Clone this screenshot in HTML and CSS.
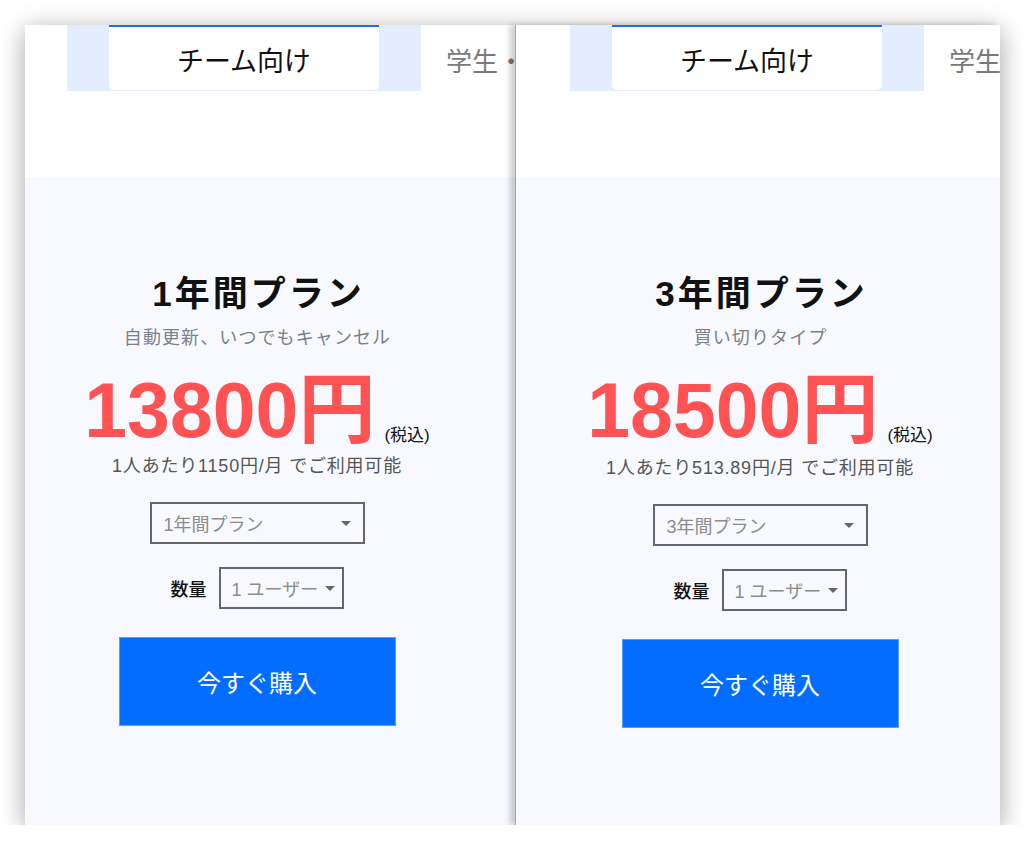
FILE: index.html
```html
<!DOCTYPE html>
<html lang="ja">
<head>
<meta charset="utf-8">
<title>プラン</title>
<link rel="stylesheet" href="styles.css">
</head>
<body>
<div class="frame">
  <section class="panel panel-left">
    <div class="screen">
      <div class="tabs">
        <div class="tabbar"><div class="tab-active">チーム向け</div></div>
        <div class="tab-other">学生・</div>
      </div>
      <div class="spacer"></div>
      <div class="plan">
        <h2 class="plan-title">1年間プラン</h2>
        <p class="plan-sub">自動更新、いつでもキャンセル</p>
        <div class="price-row"><span class="price">13800円</span><span class="tax">(税込)</span></div>
        <p class="per-month">1人あたり1150円/月 でご利用可能</p>
        <div class="select select-plan"><span class="select-text">1年間プラン</span><svg class="caret" width="10" height="5" viewBox="0 0 10 5"><polygon points="0,0 10,0 5,5"/></svg></div>
        <div class="qty-row"><span class="qty-label">数量</span><div class="select select-qty"><span class="select-text">1 ユーザー</span><svg class="caret" width="10" height="5" viewBox="0 0 10 5"><polygon points="0,0 10,0 5,5"/></svg></div></div>
        <button class="buy" type="button">今すぐ購入</button>
      </div>
    </div>
  </section>
  <section class="panel panel-right">
    <div class="screen">
      <div class="tabs">
        <div class="tabbar"><div class="tab-active">チーム向け</div></div>
        <div class="tab-other">学生</div>
      </div>
      <div class="spacer"></div>
      <div class="plan">
        <h2 class="plan-title">3年間プラン</h2>
        <p class="plan-sub">買い切りタイプ</p>
        <div class="price-row"><span class="price">18500円</span><span class="tax">(税込)</span></div>
        <p class="per-month">1人あたり513.89円/月 でご利用可能</p>
        <div class="select select-plan"><span class="select-text">3年間プラン</span><svg class="caret" width="10" height="5" viewBox="0 0 10 5"><polygon points="0,0 10,0 5,5"/></svg></div>
        <div class="qty-row"><span class="qty-label">数量</span><div class="select select-qty"><span class="select-text">1 ユーザー</span><svg class="caret" width="10" height="5" viewBox="0 0 10 5"><polygon points="0,0 10,0 5,5"/></svg></div></div>
        <button class="buy" type="button">今すぐ購入</button>
      </div>
    </div>
  </section>
</div>
</body>
</html>
```

FILE: styles.css
```css
* { box-sizing: border-box; }
html, body { margin: 0; padding: 0; background: #ffffff; }
body {
  font-family: "Liberation Sans", "Noto Sans CJK JP", sans-serif;
  color: #111;
}
.frame {
  margin: 25px 0 0 25px;
  width: 975px;
  height: 800px;
  display: flex;
  background: #ffffff;
  box-shadow: 0 5px 24px rgba(0, 0, 0, 0.36);
}
.panel {
  height: 800px;
  overflow: hidden;
  background: #f8f9fe;
  flex: none;
}
.panel-left { width: 490px; }
.panel-right {
  width: 485px;
  border-left: 1px solid #a6a6a6;
  box-shadow: -5px 0 6px rgba(0, 0, 0, 0.2);
}
.screen { width: 520px; flex: none; }
.panel-left .screen { margin-left: -18px; }
.panel-right .screen { margin-left: -6px; }

.tabs {
  display: flex;
  align-items: flex-start;
  height: 66px;
  padding-left: 60px;
  background: #ffffff;
  white-space: nowrap;
}
.tabbar {
  flex: none;
  width: 354px;
  height: 66px;
  padding-left: 42px;
  background: #e4edfd;
}
.tab-active {
  width: 270px;
  height: 65px;
  padding-top: 4px;
  background: #ffffff;
  border-top: 2px solid #1a6ff0;
  border-radius: 0 0 5px 5px;
  font-family: "Noto Sans CJK JP", sans-serif;
  font-size: 27px;
  line-height: 57px;
  text-align: center;
  color: #111;
}
.tab-other {
  flex: none;
  margin-left: 25px;
  height: 66px;
  font-family: "Noto Sans CJK JP", sans-serif;
  font-size: 26px;
  line-height: 70px;
  color: #7a7a7a;
}
.spacer { height: 86px; background: #ffffff; }

.plan {
  width: 500px;
  padding-top: 97px;
  display: flex;
  flex-direction: column;
  align-items: center;
}
.plan-title {
  margin: 0;
  padding-left: 3px;
  font-size: 35px;
  font-weight: 700;
  line-height: 40px;
  letter-spacing: 3px;
  color: #111;
}
.plan-sub {
  margin: 11px 0 0;
  padding-left: 1px;
  font-size: 18px;
  line-height: 26px;
  letter-spacing: 1.1px;
  color: #7c8088;
}
.price-row {
  margin-top: 21px;
  height: 77px;
  font-size: 77px;
  line-height: 77px;
  white-space: nowrap;
}
.price {
  font-weight: 700;
  color: #ff5252;
}
.tax {
  margin-left: 9px;
  font-size: 17px;
  line-height: 1;
  vertical-align: -4px;
  color: #111;
}
.per-month {
  margin: 5px 0 0;
  font-size: 18px;
  line-height: 24px;
  letter-spacing: 0.8px;
  color: #555;
}
.panel-right .per-month { margin-top: 7px; }

.select {
  height: 42px;
  border: 2px solid #666;
  display: flex;
  align-items: center;
  font-size: 18px;
  color: #8c8c8c;
}
.select-text { white-space: nowrap; }
.caret { display: block; flex: none; fill: #666; }
.select-plan {
  margin-top: 24px;
  width: 215px;
  padding: 0 12px;
  justify-content: space-between;
}
.qty-row {
  margin-top: 23px;
  display: flex;
  align-items: center;
  gap: 12px;
}
.qty-label {
  font-size: 18px;
  font-weight: 500;
  color: #111;
}
.select-qty {
  width: 125px;
  padding: 0 5px 0 11px;
  gap: 7px;
}
.buy {
  margin-top: 28px;
  width: 277px;
  height: 89px;
  padding: 0;
  background: #036dff;
  border: 1px solid #5c9dff;
  color: #ffffff;
  font-family: "Liberation Sans", "Noto Sans CJK JP", sans-serif;
  font-size: 24px;
}
```
